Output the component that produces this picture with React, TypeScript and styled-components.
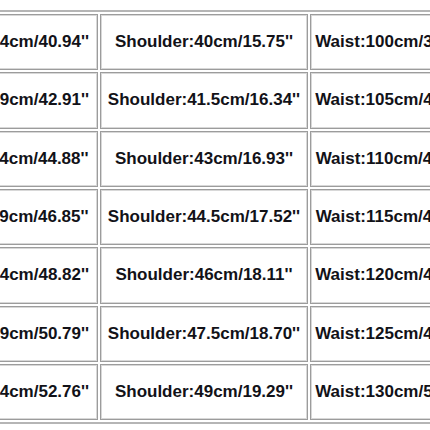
import React from 'react';
import styled, { createGlobalStyle } from 'styled-components';

const rows = [
  ['Chest:104cm/40.94\'\'', 'Shoulder:40cm/15.75\'\'', 'Waist:100cm/39.37\'\''],
  ['Chest:109cm/42.91\'\'', 'Shoulder:41.5cm/16.34\'\'', 'Waist:105cm/41.34\'\''],
  ['Chest:114cm/44.88\'\'', 'Shoulder:43cm/16.93\'\'', 'Waist:110cm/43.31\'\''],
  ['Chest:119cm/46.85\'\'', 'Shoulder:44.5cm/17.52\'\'', 'Waist:115cm/45.28\'\''],
  ['Chest:124cm/48.82\'\'', 'Shoulder:46cm/18.11\'\'', 'Waist:120cm/47.24\'\''],
  ['Chest:129cm/50.79\'\'', 'Shoulder:47.5cm/18.70\'\'', 'Waist:125cm/49.21\'\''],
  ['Chest:134cm/52.76\'\'', 'Shoulder:49cm/19.29\'\'', 'Waist:130cm/51.18\'\''],
];

const colWidths = [179, 208, 169];

const GlobalStyle = createGlobalStyle`
  html, body {
    margin: 0;
    padding: 0;
    background: #ffffff;
    overflow: hidden;
  }
`;

const Page = styled.div`
  width: 430px;
  height: 430px;
  overflow: hidden;
  background: #ffffff;
`;

const SizeTable = styled.table`
  width: 564px;
  margin-top: 10px;
  margin-left: -83px;
  border-collapse: separate;
  border-spacing: 2px;
  border-top: 2px solid #b5b5b5;
  border-bottom: 2px solid #b5b5b5;
  table-layout: fixed;
`;

const Col = styled.col<{ $w: number }>`
  width: ${p => p.$w}px;
`;

const Cell = styled.td`
  box-sizing: border-box;
  height: 56.33px;
  padding: 0;
  border: 1px solid #9c9c9c;
  box-shadow: inset 0 0 0 1px #d8d8d8;
  text-align: center;
  vertical-align: middle;
  white-space: nowrap;
  font-family: 'Liberation Sans', Arial, sans-serif;
  font-size: 17px;
  font-weight: bold;
  color: #121218;
`;

const App = () => (
  <Page>
    <GlobalStyle />
    <SizeTable>
      <colgroup>
        {colWidths.map((w, i) => (
          <Col key={i} $w={w} />
        ))}
      </colgroup>
      <tbody>
        {rows.map((row, i) => (
          <tr key={i}>
            {row.map((text, j) => (
              <Cell key={j}>{text}</Cell>
            ))}
          </tr>
        ))}
      </tbody>
    </SizeTable>
  </Page>
);

export default App;
